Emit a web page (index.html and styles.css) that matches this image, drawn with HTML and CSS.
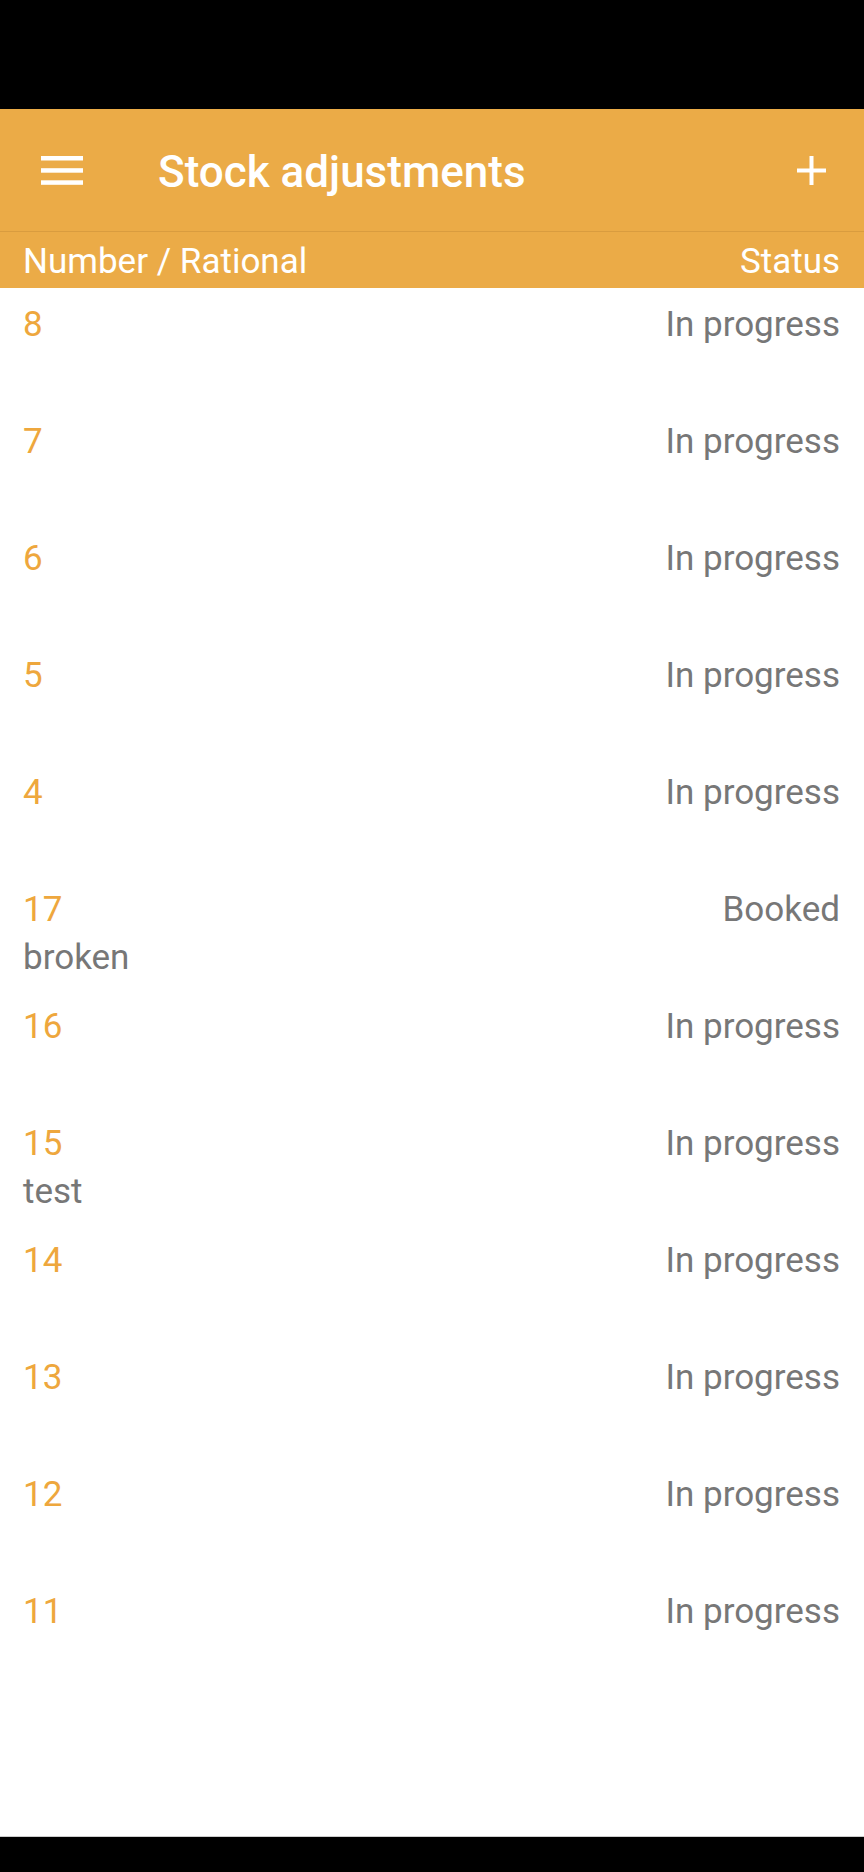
FILE: index.html
```html
<!DOCTYPE html>
<html lang="en">
<head>
  <meta charset="UTF-8">
  <title>Stock adjustments</title>
  <link rel="stylesheet" href="styles.css">
</head>
<body>

<div class="screen">
  <div class="status-bar"></div>

  <div class="toolbar">
    <svg class="menu-icon" width="42" height="29" viewBox="0 0 42 29">
      <rect x="0" y="0" width="42" height="4.5" fill="#fff"/>
      <rect x="0" y="12.2" width="42" height="4.5" fill="#fff"/>
      <rect x="0" y="24.3" width="42" height="4.5" fill="#fff"/>
    </svg>
    <h1 class="title">Stock adjustments</h1>
    <svg class="add-icon" width="29" height="29" viewBox="0 0 29 29">
      <rect x="12.5" y="0" width="4" height="29" fill="#fff"/>
      <rect x="0" y="12.5" width="29" height="4" fill="#fff"/>
    </svg>
  </div>

  <div class="list-header">
    <span>Number / Rational</span>
    <span>Status</span>
  </div>

  <div class="list">
    <div class="row"><div class="line"><span class="num">8</span><span class="status">In progress</span></div></div>
    <div class="row"><div class="line"><span class="num">7</span><span class="status">In progress</span></div></div>
    <div class="row"><div class="line"><span class="num">6</span><span class="status">In progress</span></div></div>
    <div class="row"><div class="line"><span class="num">5</span><span class="status">In progress</span></div></div>
    <div class="row"><div class="line"><span class="num">4</span><span class="status">In progress</span></div></div>
    <div class="row">
      <div class="line"><span class="num">17</span><span class="status">Booked</span></div>
      <div class="reason">broken</div>
    </div>
    <div class="row"><div class="line"><span class="num">16</span><span class="status">In progress</span></div></div>
    <div class="row">
      <div class="line"><span class="num">15</span><span class="status">In progress</span></div>
      <div class="reason">test</div>
    </div>
    <div class="row"><div class="line"><span class="num">14</span><span class="status">In progress</span></div></div>
    <div class="row"><div class="line"><span class="num">13</span><span class="status">In progress</span></div></div>
    <div class="row"><div class="line"><span class="num">12</span><span class="status">In progress</span></div></div>
    <div class="row"><div class="line"><span class="num">11</span><span class="status">In progress</span></div></div>
  </div>

  <div class="nav-bar"></div>
</div>

</body>
</html>
```

FILE: styles.css
```css
html, body {
  margin: 0;
  background: #fff;
  font-family: Roboto, 'Noto Sans', sans-serif;
}
.screen {
  display: flex;
  flex-direction: column;
  height: 1872px;
  overflow: hidden;
}
.status-bar {
  height: 109px;
  background: #000;
  flex-shrink: 0;
}
.toolbar {
  height: 122px;
  flex-shrink: 0;
  display: flex;
  align-items: center;
  padding: 0 38px 0 41px;
  background: #ebab47;
  border-bottom: 1px solid #d99c3f;
}
.menu-icon {
  display: block;
  flex-shrink: 0;
}
.title {
  flex: 1;
  margin: 0 0 0 75px;
  padding-top: 3px;
  font-size: 44px;
  line-height: 52px;
  font-weight: 500;
  color: #fff;
}
.add-icon {
  display: block;
  flex-shrink: 0;
}
.list-header {
  height: 56px;
  box-sizing: border-box;
  flex-shrink: 0;
  display: flex;
  justify-content: space-between;
  padding: 9px 24px 0 23px;
  background: #ebab47;
  color: #fff;
  font-size: 35px;
  line-height: 41px;
}
.list {
  flex: 1;
}
.row {
  height: 117px;
  box-sizing: border-box;
  padding: 16px 24px 0 23px;
  font-size: 35px;
  line-height: 41px;
}
.line {
  display: flex;
  justify-content: space-between;
}
.num {
  color: #eea73d;
}
.status {
  color: #777;
}
.reason {
  margin-top: 7px;
  color: #777;
}
.nav-bar {
  height: 35px;
  flex-shrink: 0;
  background: #000;
  border-top: 1px solid #ccc;
}
```
